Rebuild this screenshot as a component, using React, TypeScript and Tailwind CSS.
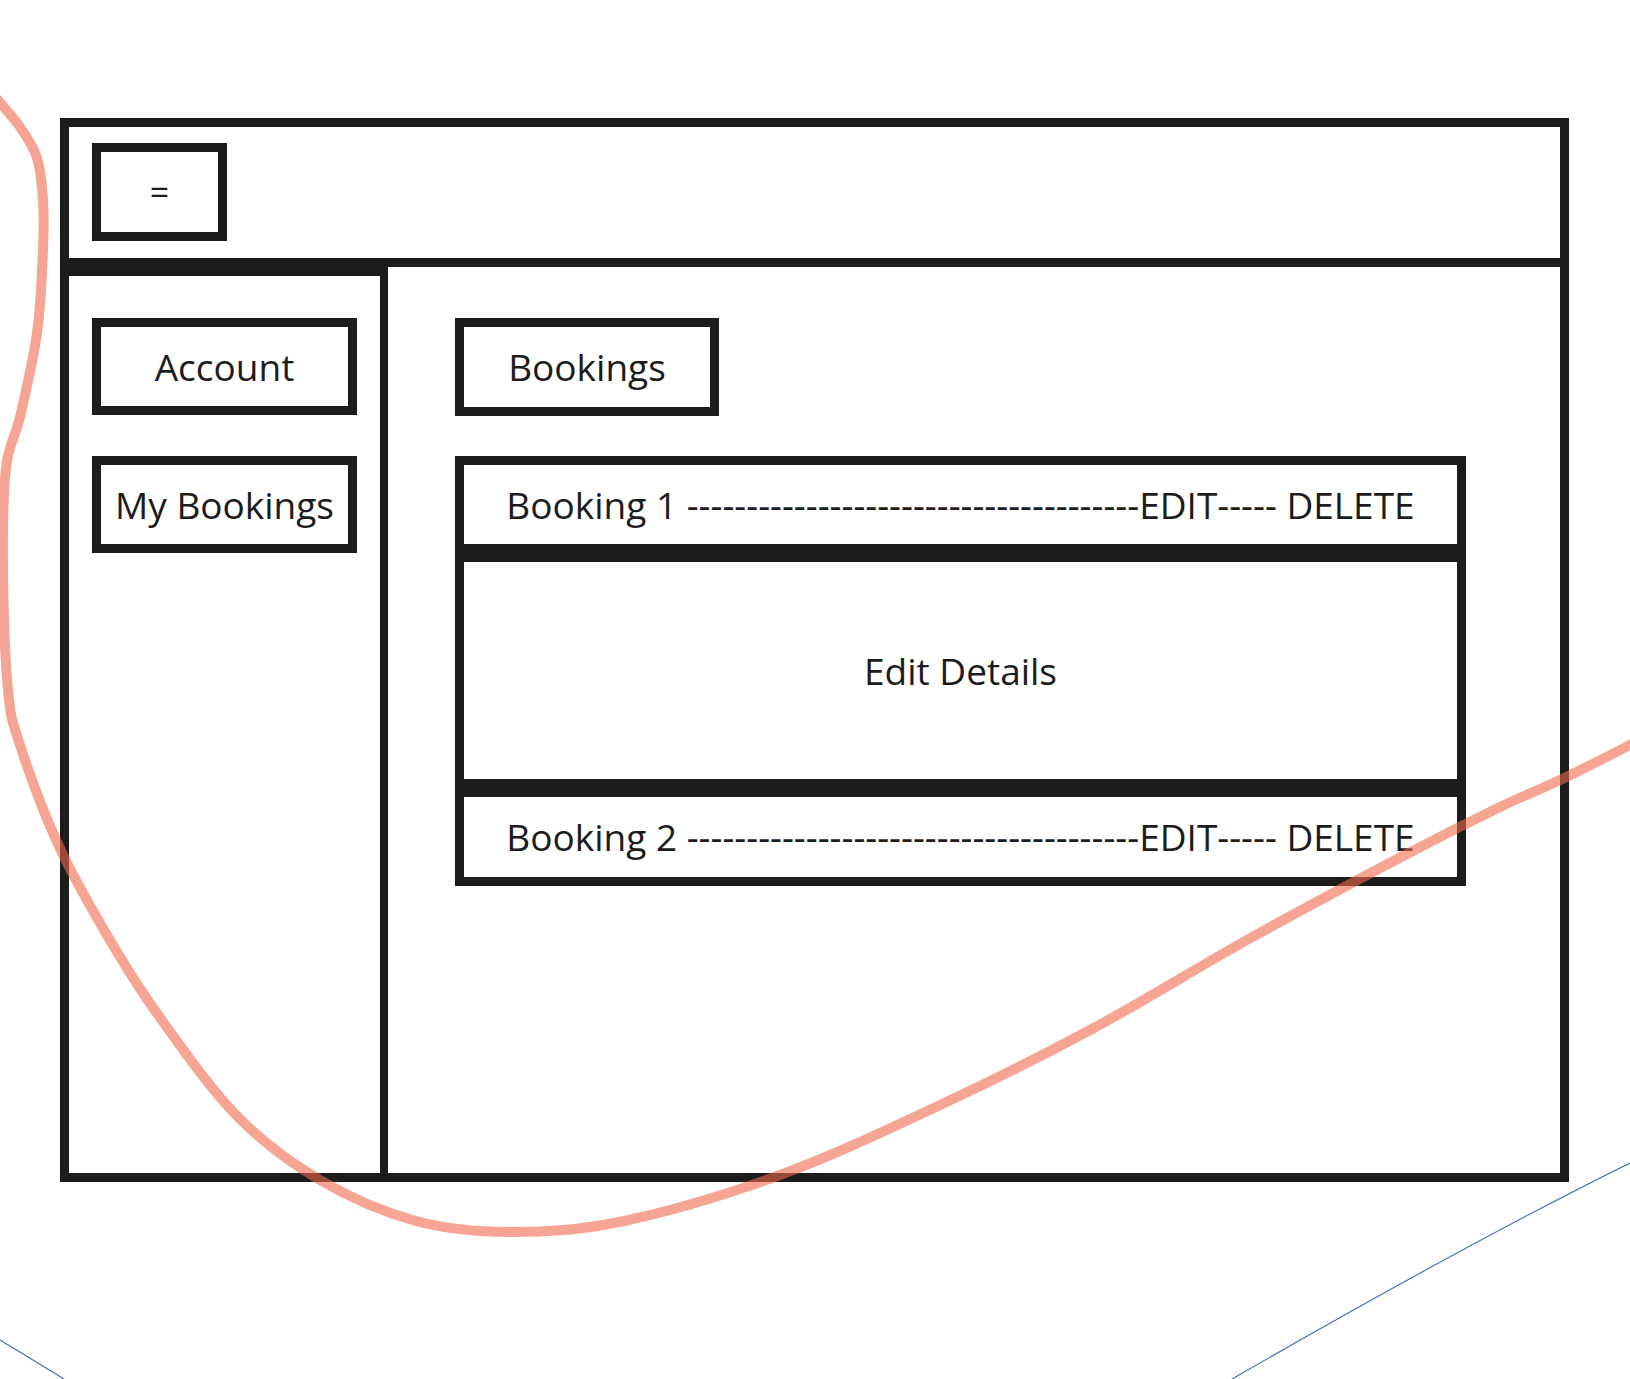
import type { ReactNode } from "react";

type Pt = [number, number];

// smooth curve through the pen stroke's points
function smoothPath(points: Pt[]) {
  let d = `M${points[0][0]},${points[0][1]}`;
  for (let i = 0; i < points.length - 1; i++) {
    const p0 = points[i - 1] ?? points[i];
    const p1 = points[i];
    const p2 = points[i + 1];
    const p3 = points[i + 2] ?? p2;
    const c1x = p1[0] + (p2[0] - p0[0]) / 6;
    const c1y = p1[1] + (p2[1] - p0[1]) / 6;
    const c2x = p2[0] - (p3[0] - p1[0]) / 6;
    const c2y = p2[1] - (p3[1] - p1[1]) / 6;
    d += ` C${c1x},${c1y} ${c2x},${c2y} ${p2[0]},${p2[1]}`;
  }
  return d;
}

const penStroke: Pt[] = [
  [-4, 98],
  [20, 127],
  [37, 158],
  [43, 200],
  [43, 250],
  [37, 333],
  [20, 417],
  [6, 468],
  [3, 567],
  [8, 690],
  [20, 745],
  [57, 842],
  [104, 930],
  [156, 1012],
  [236, 1115],
  [320, 1180],
  [416, 1221],
  [512, 1232],
  [624, 1221],
  [780, 1175],
  [936, 1107],
  [1092, 1029],
  [1247, 940],
  [1403, 856],
  [1500, 807],
  [1560, 780],
  [1636, 742],
];

function Box({
  className = "",
  children,
}: {
  className?: string;
  children?: ReactNode;
}) {
  return (
    <div
      className={`flex items-center justify-center border-[9px] border-[#1c1c1c] text-[37px] text-[#1c1c1c] ${className}`}
    >
      {children}
    </div>
  );
}

const dashes = "-".repeat(38);

export default function App() {
  return (
    <div
      className="relative w-[1630px] h-[1379px] overflow-hidden bg-white"
      style={{ fontFamily: '"Open Sans", "Noto Sans", sans-serif' }}
    >
      <div className="pt-[118px] pl-[60px]">
        <div className="flex flex-col w-[1509px] h-[1064px] border-[9px] border-[#1c1c1c]">
          <header className="h-[140px] shrink-0 border-b-[9px] border-[#1c1c1c] pt-[16px] pl-[23px]">
            <Box className="w-[135px] h-[98px] !text-[34px] leading-none">=</Box>
          </header>

          <div className="flex flex-1">
            <aside className="w-[319px] shrink-0 border-t-[9px] border-r-[8px] border-[#1c1c1c] pt-[42px] pl-[23px] flex flex-col gap-[41px]">
              <Box className="w-[265px] h-[97px]">Account</Box>
              <Box className="w-[265px] h-[97px]">My Bookings</Box>
            </aside>

            <main className="flex-1 pt-[51px] pl-[67px]">
              <Box className="w-[264px] h-[98px]">Bookings</Box>

              <div className="mt-[40px] w-[1011px] flex flex-col">
                <Box className="h-[97px] whitespace-nowrap">
                  Booking 1 {dashes}EDIT----- DELETE
                </Box>
                <Box className="h-[235px]">Edit Details</Box>
                <Box className="h-[98px] whitespace-nowrap">
                  Booking 2 {dashes}EDIT----- DELETE
                </Box>
              </div>
            </main>
          </div>
        </div>
      </div>

      <svg
        className="absolute inset-0 pointer-events-none"
        width="1630"
        height="1379"
        viewBox="0 0 1630 1379"
        fill="none"
      >
        <path
          d={smoothPath(penStroke)}
          stroke="#f0694f"
          strokeOpacity={0.6}
          strokeWidth={10}
          strokeLinecap="round"
          strokeLinejoin="round"
        />
        <path d="M0,1340 Q30,1358 64,1379" stroke="#4472c4" strokeWidth={1.2} />
        <path d="M1630,1163 Q1470,1242 1232,1379" stroke="#4472c4" strokeWidth={1.2} />
      </svg>
    </div>
  );
}
